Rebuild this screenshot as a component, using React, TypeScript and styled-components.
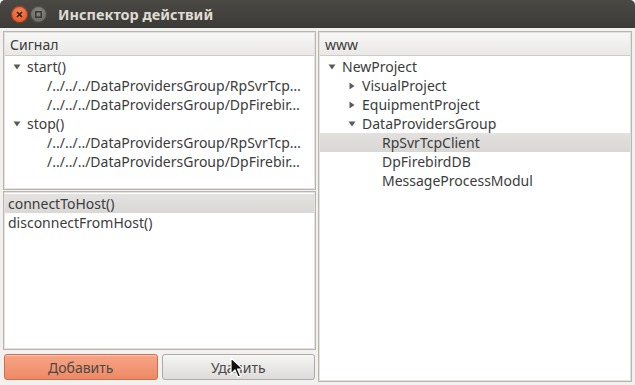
import React from 'react';
import styled, { createGlobalStyle } from 'styled-components';

const GlobalStyle = createGlobalStyle`
  html, body {
    margin: 0;
    padding: 0;
    background: #f2f1f0;
  }
  body {
    font-family: 'Noto Sans', 'DejaVu Sans', sans-serif;
    font-size: 14px;
    color: #3c3c3c;
  }
`;

const Window = styled.div`
  position: relative;
  width: 635px;
  height: 385px;
  display: flex;
  flex-direction: column;
  background: #f2f1f0;
  overflow: hidden;
`;

const TitleBar = styled.div`
  height: 28px;
  display: flex;
  align-items: center;
  padding-left: 11px;
  gap: 2px;
  background: linear-gradient(#4a4944, #3c3b37);
  border-radius: 5px 5px 0 0;
`;

const WinButton = styled.div<{ $close?: boolean }>`
  width: 17px;
  height: 17px;
  border-radius: 50%;
  display: flex;
  align-items: center;
  justify-content: center;
  background: ${(p) =>
    p.$close
      ? 'radial-gradient(circle at 50% 35%, #f5845a, #df4a19)'
      : 'radial-gradient(circle at 50% 35%, #8a8984, #5d5c57)'};
  box-shadow: inset 0 0 0 1px rgba(0, 0, 0, 0.35);
`;

const Title = styled.div`
  margin-left: 9px;
  font-family: 'Noto Sans', sans-serif;
  font-weight: bold;
  font-size: 14.5px;
  color: #dfdbd2;
`;

const Body = styled.div`
  flex: 1;
  display: grid;
  grid-template-columns: 313px 314px;
  column-gap: 2px;
  padding: 3px;
  min-height: 0;
`;

const Column = styled.div`
  display: flex;
  flex-direction: column;
  gap: 1px;
  min-height: 0;
`;

const Panel = styled.div<{ $height?: number }>`
  border: 1px solid #b9b6b0;
  box-shadow: inset 0 0 0 1px #e4e2df;
  background: #fff;
  padding: 1px;
  display: flex;
  flex-direction: column;
  ${(p) => (p.$height ? `height: ${p.$height}px; flex: none;` : 'flex: 1;')}
  min-height: 0;
  box-sizing: border-box;
`;

const Header = styled.div`
  height: 22px;
  flex: none;
  display: flex;
  align-items: center;
  padding-left: 5px;
  background: linear-gradient(#f7f7f6, #e9e8e6);
  border-bottom: 1px solid #cdcbc7;
  color: #3c3c3c;
`;

const Rows = styled.div`
  padding-top: 1px;
  display: flex;
  flex-direction: column;
`;

const Row = styled.div<{ $depth: number; $selected?: boolean }>`
  height: 19px;
  display: flex;
  align-items: center;
  padding-left: ${(p) => 8 + p.$depth * 20}px;
  white-space: nowrap;
  background: ${(p) => (p.$selected ? 'linear-gradient(#e2e1df, #d8d7d4)' : 'transparent')};
`;

const Arrow = styled.span`
  width: 14px;
  display: inline-flex;
  align-items: center;
  flex: none;
`;

const Spacer = styled.span`
  width: 14px;
  flex: none;
`;

const ListRow = styled.div<{ $selected?: boolean }>`
  height: 19px;
  display: flex;
  align-items: center;
  padding-left: 3px;
  white-space: nowrap;
  background: ${(p) => (p.$selected ? 'linear-gradient(#e4e3e1, #d9d8d5)' : 'transparent')};
`;

const ButtonRow = styled.div`
  height: 28px;
  flex: none;
  display: grid;
  grid-template-columns: 1fr 1fr;
  column-gap: 4px;
  padding: 3px 1px 0 1px;
`;

const Button = styled.button<{ $primary?: boolean }>`
  height: 26px;
  border-radius: 3px;
  font-family: 'Noto Sans', sans-serif;
  font-size: 14px;
  color: #4a4a48;
  border: 1px solid ${(p) => (p.$primary ? '#c8704f' : '#aeaba6')};
  background: ${(p) =>
    p.$primary ? 'linear-gradient(#f7a587, #ee8964)' : 'linear-gradient(#f5f5f4, #dddcda)'};
  box-shadow: inset 0 1px 0 rgba(255, 255, 255, 0.4);
  padding: 0;
`;

const Cursor = styled.svg`
  position: absolute;
  left: 230px;
  top: 357px;
`;

type Node = { label: string; depth: number; arrow?: 'down' | 'right'; selected?: boolean };

const signals: Node[] = [
  { label: 'start()', depth: 0, arrow: 'down' },
  { label: '/../../../DataProvidersGroup/RpSvrTcp…', depth: 1 },
  { label: '/../../../DataProvidersGroup/DpFirebir…', depth: 1 },
  { label: 'stop()', depth: 0, arrow: 'down' },
  { label: '/../../../DataProvidersGroup/RpSvrTcp…', depth: 1 },
  { label: '/../../../DataProvidersGroup/DpFirebir…', depth: 1 },
];

const project: Node[] = [
  { label: 'NewProject', depth: 0, arrow: 'down' },
  { label: 'VisualProject', depth: 1, arrow: 'right' },
  { label: 'EquipmentProject', depth: 1, arrow: 'right' },
  { label: 'DataProvidersGroup', depth: 1, arrow: 'down' },
  { label: 'RpSvrTcpClient', depth: 2, selected: true },
  { label: 'DpFirebirdDB', depth: 2 },
  { label: 'MessageProcessModul', depth: 2 },
];

const Triangle: React.FC<{ dir: 'down' | 'right' }> = ({ dir }) => (
  <svg width="8" height="8" viewBox="0 0 8 8">
    {dir === 'down' ? (
      <polygon points="0.5,1.5 7.5,1.5 4,6.5" fill="#5a5a57" />
    ) : (
      <polygon points="1.5,0.5 6.5,4 1.5,7.5" fill="#5a5a57" />
    )}
  </svg>
);

const Tree: React.FC<{ nodes: Node[] }> = ({ nodes }) => (
  <Rows>
    {nodes.map((n, i) => (
      <Row key={i} $depth={n.depth} $selected={n.selected}>
        {n.arrow ? (
          <Arrow>
            <Triangle dir={n.arrow} />
          </Arrow>
        ) : (
          <Spacer />
        )}
        {n.label}
      </Row>
    ))}
  </Rows>
);

const App: React.FC = () => {
  return (
    <Window>
      <GlobalStyle />
      <TitleBar>
        <WinButton $close>
          <svg width="7" height="7" viewBox="0 0 7 7">
            <path d="M1 1 L6 6 M6 1 L1 6" stroke="#3a1a0e" strokeWidth="1.6" />
          </svg>
        </WinButton>
        <WinButton>
          <svg width="7" height="7" viewBox="0 0 7 7">
            <rect x="0.8" y="0.8" width="5.4" height="5.4" fill="none" stroke="#2e2d2a" strokeWidth="1.3" />
          </svg>
        </WinButton>
        <Title>Инспектор действий</Title>
      </TitleBar>
      <Body>
        <Column>
          <Panel $height={159}>
            <Header>Сигнал</Header>
            <Tree nodes={signals} />
          </Panel>
          <Panel>
            <Rows>
              <ListRow $selected>connectToHost()</ListRow>
              <ListRow>disconnectFromHost()</ListRow>
            </Rows>
          </Panel>
          <ButtonRow>
            <Button $primary>Добавить</Button>
            <Button>Удалить</Button>
          </ButtonRow>
        </Column>
        <Column>
          <Panel>
            <Header>www</Header>
            <Tree nodes={project} />
          </Panel>
        </Column>
      </Body>
      <Cursor width="14" height="22" viewBox="0 0 14 22">
        <path d="M1 1 L1 17 L5 13 L8 20 L10.5 19 L7.5 12 L13 12 Z" fill="#111" stroke="#fff" strokeWidth="1.2" strokeLinejoin="round" />
      </Cursor>
    </Window>
  );
};

export default App;
